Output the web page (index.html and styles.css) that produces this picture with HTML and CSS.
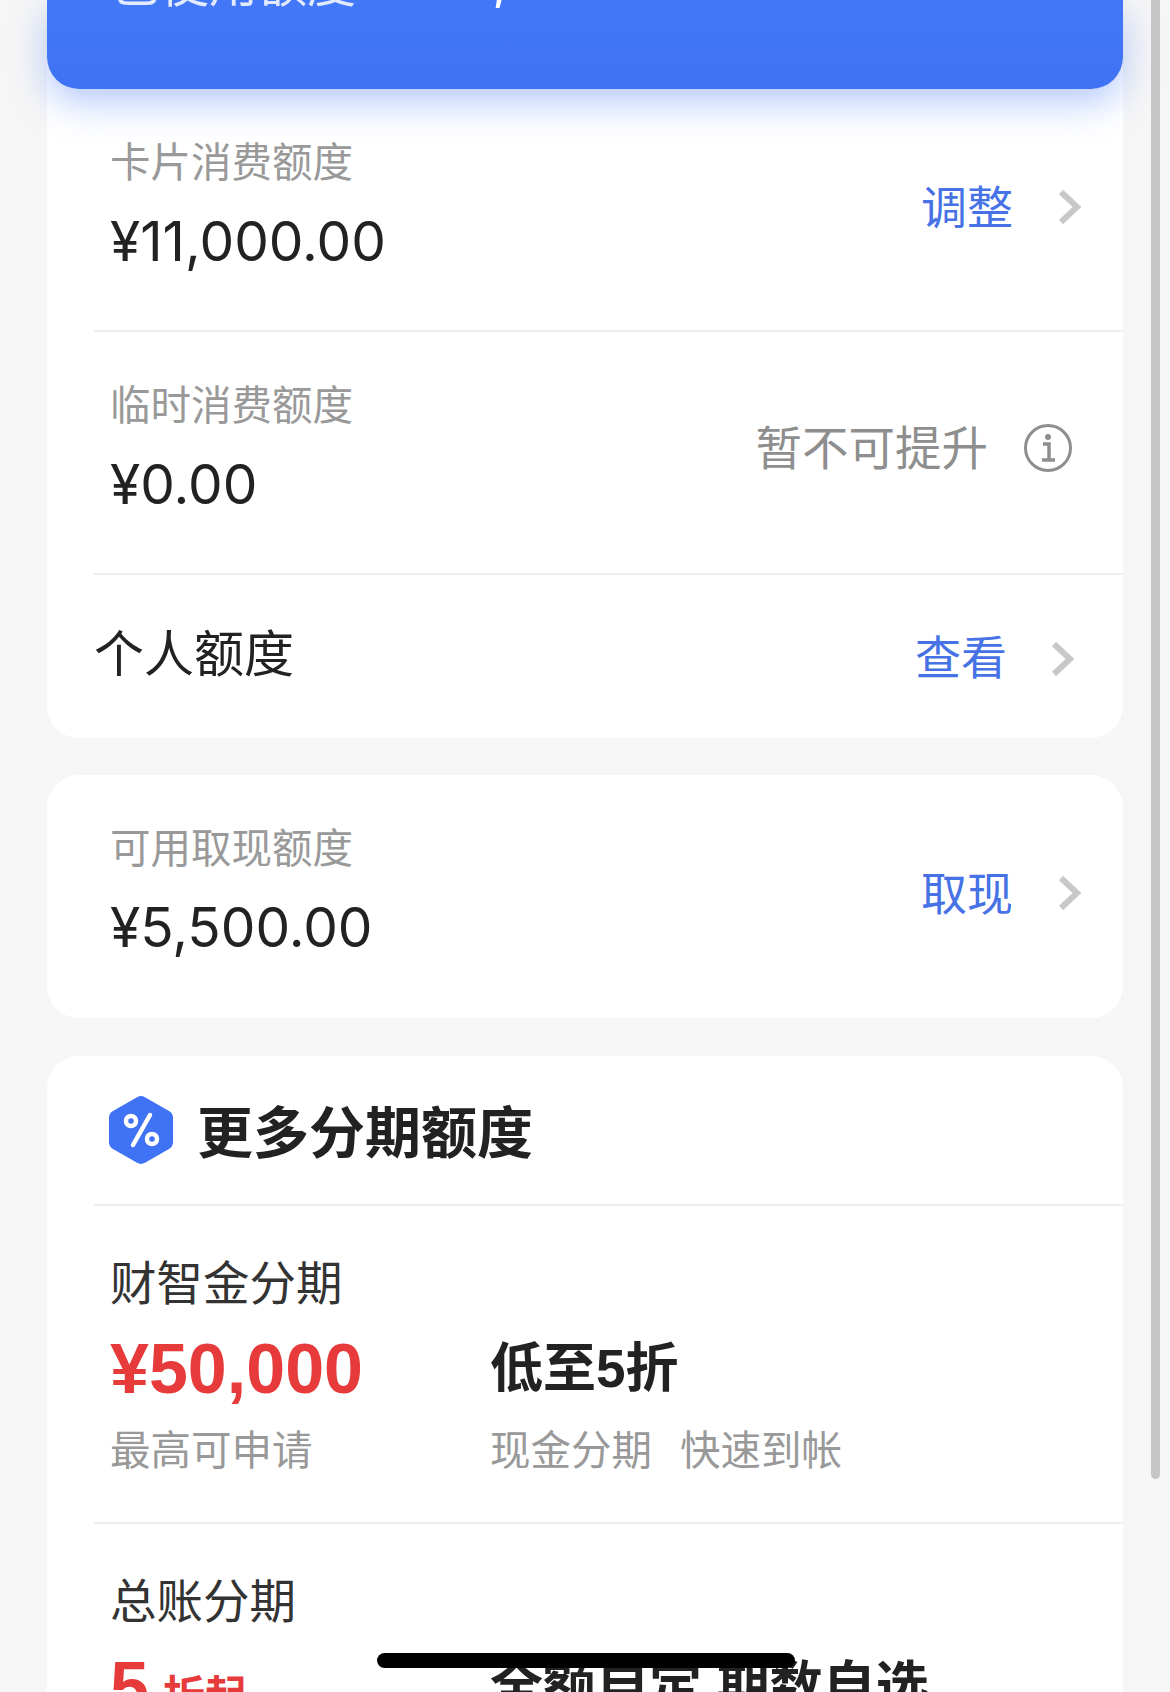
FILE: index.html
```html
<!DOCTYPE html>
<html lang="zh-CN">
<head>
  <meta charset="UTF-8">
  <title>额度管理</title>
  <link rel="stylesheet" href="styles.css">
</head>
<body>
  <div class="page">
    <section class="card">
      <div class="used-card">
        <span class="used-label">已使用额度</span>
        <span class="used-value">¥5,500.00</span>
      </div>
      <div class="row">
        <div>
          <div class="label">卡片消费额度</div>
          <div class="value">¥11,000.00</div>
        </div>
        <a class="action">
          <span>调整</span>
          <svg class="chevron" viewBox="0 0 24 36"><path d="M3 3l16 15L3 33"/></svg>
        </a>
      </div>
      <div class="row">
        <div>
          <div class="label">临时消费额度</div>
          <div class="value">¥0.00</div>
        </div>
        <a class="action action-off">
          <span>暂不可提升</span>
          <svg class="info" viewBox="0 0 48 48">
            <circle cx="24" cy="24" r="22.5"/>
            <circle class="info-dot" cx="24" cy="13" r="3"/>
            <path class="info-stem" d="M19 20h6v16M18 36h13"/>
          </svg>
        </a>
      </div>
      <div class="row row-short">
        <div class="row-title">个人额度</div>
        <a class="action action-short">
          <span>查看</span>
          <svg class="chevron" viewBox="0 0 24 36"><path d="M3 3l16 15L3 33"/></svg>
        </a>
      </div>
    </section>

    <section class="card">
      <div class="row">
        <div>
          <div class="label">可用取现额度</div>
          <div class="value">¥5,500.00</div>
        </div>
        <a class="action">
          <span>取现</span>
          <svg class="chevron" viewBox="0 0 24 36"><path d="M3 3l16 15L3 33"/></svg>
        </a>
      </div>
    </section>

    <section class="card">
      <div class="more-head">
        <svg class="hex" viewBox="0 0 64 70">
          <path class="hex-bg" d="M28 2.2a8 8 0 0 1 8 0L60 16a8 8 0 0 1 4 7v24a8 8 0 0 1-4 7L36 67.8a8 8 0 0 1-8 0L4 54a8 8 0 0 1-4-7V23a8 8 0 0 1 4-7z"/>
          <path class="hex-line" d="M41 20L24 50"/>
          <circle class="hex-line" cx="22" cy="26" r="5"/>
          <circle class="hex-line" cx="43" cy="44" r="5"/>
        </svg>
        <h2>更多分期额度</h2>
      </div>
      <div class="plan">
        <div class="plan-name">财智金分期</div>
        <div class="plan-grid">
          <div class="figure figure-red">¥50,000</div>
          <div class="figure">低至5折</div>
          <div class="note">最高可申请</div>
          <div class="note note-pair"><span>现金分期</span><span>快速到帐</span></div>
        </div>
      </div>
      <div class="plan">
        <div class="plan-name">总账分期</div>
        <div class="plan-grid">
          <div class="figure figure-red">5<small>折起</small></div>
          <div class="figure">全额自定 期数自选</div>
        </div>
      </div>
    </section>
  </div>

  <div class="scrollbar"></div>
  <div class="home-bar"></div>
</body>
</html>
```

FILE: styles.css
```css
html, body {
  margin: 0;
  padding: 0;
  height: 1692px;
  overflow: hidden;
  background: #f6f6f6;
  font-family: Inter, "Noto Sans CJK SC", sans-serif;
  color: #222;
}
.page {
  padding: 0 47px;
}
.card {
  background: #fff;
  border-radius: 0 0 32px 32px;
  margin-bottom: 37px;
}
.card + .card {
  border-radius: 32px;
  margin-bottom: 38px;
}
.used-card {
  position: relative;
  height: 89px;
  box-sizing: border-box;
  padding: 0 64px 76px;
  display: flex;
  align-items: flex-end;
  gap: 74px;
  background: linear-gradient(#4278f7, #3f72f4);
  border-radius: 0 0 32px 32px;
  box-shadow: 0 14px 36px rgba(64, 115, 245, 0.38);
  color: #fff;
}
.used-label {
  font-size: 49px;
  line-height: 56px;
  opacity: 0.85;
}
.used-value {
  font-size: 55px;
  line-height: 56px;
  margin-bottom: 7px;
}
.row {
  display: flex;
  justify-content: space-between;
  align-items: center;
  margin-left: 47px;
  padding: 47px 0 54px 16px;
  border-top: 2px solid #eeeeee;
  height: 243px;
  box-sizing: border-box;
}
.row:first-child {
  padding-top: 45px;
  border-top: none;
}
.used-card + .row {
  height: 241px;
  border-top: none;
}
.label {
  font-size: 40.5px;
  line-height: 56px;
  color: #999;
}
.value {
  font-size: 55px;
  line-height: 72px;
  margin-top: 14px;
}
.action {
  display: flex;
  align-items: center;
  gap: 45px;
  font-size: 46px;
  line-height: 60px;
  color: #4672e6;
  margin-right: 41px;
  margin-top: 2px;
}
.chevron {
  width: 24px;
  height: 36px;
  fill: none;
  stroke: #c8c8c8;
  stroke-width: 6;
}
.action-off {
  gap: 36px;
  font-size: 46.5px;
  color: #8e8e8e;
  margin-right: 51px;
  margin-top: -2px;
}
.info {
  width: 48px;
  height: 48px;
  fill: none;
  stroke: #8e8e8e;
  stroke-width: 3;
}
.info-dot {
  fill: #8e8e8e;
  stroke: none;
}
.info-stem {
  stroke-width: 3.5;
}
.row-short {
  height: 165px;
  padding: 0;
}
.row-title {
  font-size: 50px;
  line-height: 60px;
  margin-bottom: 6px;
}
.action-short {
  gap: 44px;
  margin-right: 48px;
  margin-top: 0;
}
.action-short .chevron {
  margin-top: 4px;
}
.more-head {
  display: flex;
  align-items: center;
  gap: 24px;
  height: 148px;
  padding: 0 0 0 62px;
}
.more-head h2 {
  margin: 0 0 4px;
  font-size: 56px;
  font-weight: 700;
}
.hex {
  width: 64px;
  height: 70px;
}
.hex-bg {
  fill: #3f72f4;
}
.hex-line {
  fill: none;
  stroke: #fff;
  stroke-width: 4.5;
  stroke-linecap: round;
}
.plan {
  margin-left: 47px;
  padding: 47px 0 43px 16px;
  border-top: 2px solid #eeeeee;
}
.plan-name {
  font-size: 46.5px;
  line-height: 60px;
  color: #333;
}
.plan-grid {
  display: grid;
  grid-template-columns: 380px 1fr;
  margin-top: 21px;
  row-gap: 19px;
}
.figure {
  font-family: "Liberation Sans", "Noto Sans CJK SC", sans-serif;
  font-size: 53px;
  line-height: 70px;
  font-weight: 700;
  color: #222;
}
.figure-red {
  font-size: 70px;
  color: #e73a3a;
}
.figure-red small {
  font-size: 42px;
  margin-left: 14px;
}
.note {
  font-size: 40.5px;
  line-height: 56px;
  color: #999;
}
.note-pair {
  display: flex;
  gap: 28px;
}
.scrollbar {
  position: absolute;
  top: 0;
  left: 1151px;
  width: 9px;
  height: 1479px;
  background: #c6c6c6;
  border-radius: 0 0 5px 5px;
}
.home-bar {
  position: absolute;
  top: 1653px;
  left: 377px;
  width: 418px;
  height: 15px;
  background: #000;
  border-radius: 8px;
}
```
